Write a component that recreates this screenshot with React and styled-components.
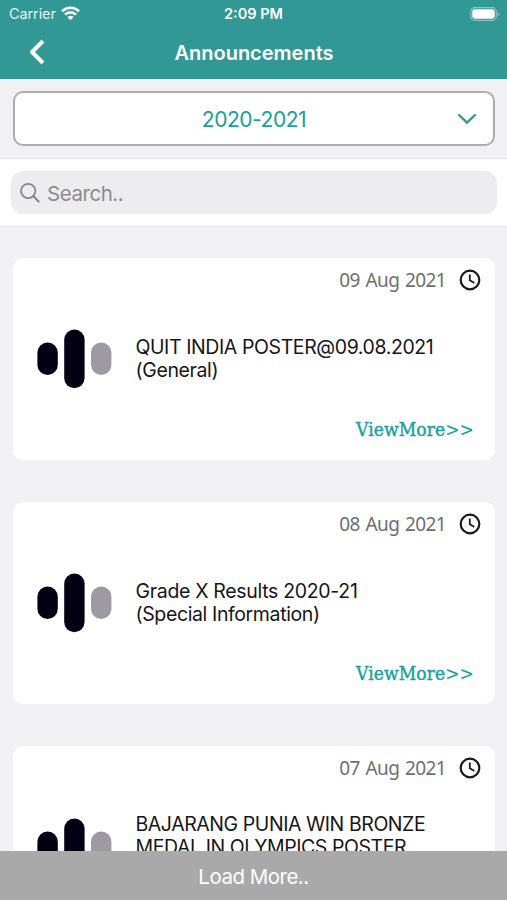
import React from 'react';
import styled, { createGlobalStyle } from 'styled-components';

const teal = '#329896';
const tealText = '#18a09b';

const announcements = [
  { date: '09 Aug 2021', lines: ['QUIT INDIA POSTER@09.08.2021', '(General)'], spacing: [-0.4, -0.38], more: true },
  { date: '08 Aug 2021', lines: ['Grade X Results 2020-21', '(Special Information)'], spacing: [-0.32, -0.38], more: true },
  { date: '07 Aug 2021', lines: ['BAJARANG PUNIA WIN BRONZE', 'MEDAL IN OLYMPICS POSTER'], spacing: [-0.43, -0.43], rows: 3 },
];

const GlobalStyle = createGlobalStyle`
  body {
    margin: 0;
    background: #f0f0f5;
    font-family: Inter, "Liberation Sans", sans-serif;
  }
`;

const WifiIcon = () => (
  <svg width="19" height="15" viewBox="0 0 19 15" fill="none" stroke="#fff" strokeWidth="2.6">
    <path d="M1 5.2C5.8 .6 13.2 .6 18 5.2" />
    <path d="M4 8.6C7.2 5.6 11.8 5.6 15 8.6" />
    <path d="M6.4 11C8.2 9.4 10.8 9.4 12.6 11L9.5 14.2Z" fill="#fff" stroke="none" />
  </svg>
);

const BatteryIcon = () => (
  <svg width="30" height="14" viewBox="0 0 30 14">
    <rect x="0.7" y="0.7" width="25.6" height="12.6" rx="3.8" fill="none" stroke="#8cc5c4" strokeWidth="1.2" />
    <rect x="2.3" y="2.3" width="22.4" height="9.4" rx="2.4" fill="#fff" />
    <path d="M27.7 4.8C29.8 5.6 29.8 8.4 27.7 9.2Z" fill="#8cc5c4" />
  </svg>
);

const BackIcon = () => (
  <svg width="16" height="26" viewBox="0 0 16 26" fill="none" stroke="#fff" strokeWidth="4">
    <path d="M14 2L3 13L14 24" strokeLinejoin="round" />
  </svg>
);

const ChevronIcon = () => (
  <svg width="20" height="12" viewBox="0 0 20 12" fill="none" stroke={teal} strokeWidth="2.3" strokeLinecap="round">
    <path d="M2 2L10 9.6L18 2" />
  </svg>
);

const SearchIcon = () => (
  <svg width="20" height="20" viewBox="0 0 20 20" fill="none" stroke="#86868a" strokeWidth="1.8" strokeLinecap="round">
    <circle cx="8.2" cy="8" r="7.1" />
    <path d="M13.3 13.1L18.6 18.4" strokeWidth="2.1" />
  </svg>
);

const ClockIcon = () => (
  <svg width="22" height="22" viewBox="0 0 22 22" fill="none" stroke="#1a1a1a">
    <circle cx="11" cy="11" r="9.3" strokeWidth="2.2" />
    <path d="M10.8 5.5V11.3L15.3 14" strokeWidth="1.8" />
  </svg>
);

const LogoIcon = () => (
  <svg width="76" height="60" viewBox="0 0 76 60">
    <rect x="0.4" y="13.6" width="20.4" height="32.4" rx="10.2" fill="#030014" />
    <rect x="27.2" y="0.4" width="20.4" height="58.8" rx="10.2" fill="#030014" />
    <rect x="54" y="13.6" width="20.4" height="32.4" rx="10.2" fill="#9d9ba1" />
  </svg>
);

const AnnouncementCard = ({ item }) => (
  <AnnouncementCard.Wrapper>
    <AnnouncementCard.DateRow>
      <AnnouncementCard.Date>{item.date}</AnnouncementCard.Date>
      <ClockIcon />
    </AnnouncementCard.DateRow>
    <AnnouncementCard.Content>
      <LogoIcon />
      <AnnouncementCard.Title $rows={item.rows || 2}>
        {item.lines.map((line, i) => (
          <AnnouncementCard.Line key={line} $spacing={item.spacing[i]}>{line}</AnnouncementCard.Line>
        ))}
      </AnnouncementCard.Title>
    </AnnouncementCard.Content>
    {item.more &&
      <AnnouncementCard.More>
        ViewMore<AnnouncementCard.Arrows>&gt;&gt;</AnnouncementCard.Arrows>
      </AnnouncementCard.More>}
  </AnnouncementCard.Wrapper>
);

AnnouncementCard.Wrapper = styled.article`
  display: flex;
  flex-direction: column;
  flex-shrink: 0;
  height: 202px;
  border-radius: 10px;
  background: #fff;
`;

AnnouncementCard.DateRow = styled.div`
  display: flex;
  align-items: center;
  justify-content: flex-end;
  gap: 13px;
  height: 44px;
  padding-right: 14px;
`;

AnnouncementCard.Date = styled.span`
  font-family: "Noto Sans", sans-serif;
  font-size: 19px;
  letter-spacing: -0.65px;
  word-spacing: 1.6px;
  color: #6e6e6e;
`;

AnnouncementCard.Content = styled.div`
  display: flex;
  align-items: center;
  gap: 23px;
  height: 115px;
  padding-left: 24px;
`;

AnnouncementCard.Title = styled.div`
  min-height: ${props => props.$rows * 23.4}px;
  font-size: 19.5px;
  line-height: 23.4px;
  color: #161616;
`;

AnnouncementCard.Line = styled.div`
  white-space: nowrap;
  letter-spacing: ${props => props.$spacing}px;
`;

AnnouncementCard.More = styled.a`
  align-self: flex-end;
  margin-right: 21px;
  font-family: "DejaVu Serif Condensed", "DejaVu Serif", serif;
  font-size: 19px;
  line-height: 25px;
  letter-spacing: 0.1px;
  -webkit-text-stroke: 0.4px ${tealText};
  color: ${tealText};
`;

AnnouncementCard.Arrows = styled.span`
  -webkit-text-stroke: 0;
`;

const App = () => (
  <Screen>
    <GlobalStyle />
    <Header>
      <StatusBar>
        <Carrier>Carrier <WifiIcon /></Carrier>
        <Clock>2:09 PM</Clock>
        <BatterySlot><BatteryIcon /></BatterySlot>
      </StatusBar>
      <NavBar>
        <BackIcon />
        <NavTitle>Announcements</NavTitle>
      </NavBar>
    </Header>
    <YearBar>
      <YearSelect>
        <Year>2020-2021</Year>
        <ChevronIcon />
      </YearSelect>
    </YearBar>
    <SearchBar>
      <SearchField>
        <SearchIcon />
        <Placeholder>Search..</Placeholder>
      </SearchField>
    </SearchBar>
    <List>
      {announcements.map(item => <AnnouncementCard key={item.date} item={item} />)}
    </List>
    <LoadMore>Load More..</LoadMore>
  </Screen>
);

const Screen = styled.div`
  display: flex;
  flex-direction: column;
  width: 507px;
  height: 900px;
  overflow: hidden;
`;

const Header = styled.header`
  flex: 0 0 79.3px;
  background: ${teal};
  color: #fff;
`;

const StatusBar = styled.div`
  display: grid;
  grid-template-columns: 1fr auto 1fr;
  align-items: center;
  height: 27px;
  padding: 0 7px 0 9px;
`;

const Carrier = styled.div`
  display: flex;
  align-items: center;
  gap: 5px;
  font-size: 14.5px;
  letter-spacing: -0.1px;
  color: #e2f3f2;
`;

const Clock = styled.div`
  margin-right: 2px;
  font-size: 14.5px;
  font-weight: 600;
`;

const BatterySlot = styled.div`
  display: flex;
  justify-content: flex-end;
`;

const NavBar = styled.div`
  display: grid;
  grid-template-columns: 50px 1fr 50px;
  align-items: center;
  height: 50px;
  padding: 0 28px 0 29px;
`;

const NavTitle = styled.h1`
  margin: 0;
  padding-top: 1px;
  text-align: center;
  font-size: 20px;
  font-weight: 600;
`;

const YearBar = styled.div`
  flex: 0 0 79.7px;
  box-sizing: border-box;
  padding: 12px 12.5px;
  border-bottom: 1px solid #e3e3e7;
`;

const YearSelect = styled.div`
  display: grid;
  grid-template-columns: 1fr auto;
  align-items: center;
  box-sizing: border-box;
  height: 55px;
  padding: 0 16px 0 37px;
  border: 2px solid #adadaf;
  border-radius: 10px;
  background: #fff;
`;

const Year = styled.span`
  padding-top: 2px;
  text-align: center;
  font-size: 21px;
  letter-spacing: -0.45px;
  color: ${tealText};
`;

const SearchBar = styled.div`
  flex: 0 0 67.5px;
  box-sizing: border-box;
  padding: 12px 10px 0 11px;
  border-bottom: 1px solid #e6e6ea;
  background: #fff;
`;

const SearchField = styled.div`
  display: flex;
  align-items: center;
  gap: 7px;
  height: 43px;
  padding-left: 9px;
  border-radius: 12px;
  background: #ededef;
`;

const Placeholder = styled.span`
  padding-top: 2px;
  font-size: 20.5px;
  letter-spacing: -0.45px;
  color: #8b8b8f;
`;

const List = styled.main`
  display: flex;
  flex: 1;
  flex-direction: column;
  gap: 42.3px;
  min-height: 0;
  overflow: hidden;
  padding: 30.8px 12px 0 12.5px;
`;

const LoadMore = styled.footer`
  display: flex;
  flex: 0 0 49px;
  align-items: center;
  justify-content: center;
  box-sizing: border-box;
  padding-top: 2px;
  background: #a9a9a9;
  font-size: 20.5px;
  letter-spacing: -0.5px;
  color: #fff;
`;

export default App;
